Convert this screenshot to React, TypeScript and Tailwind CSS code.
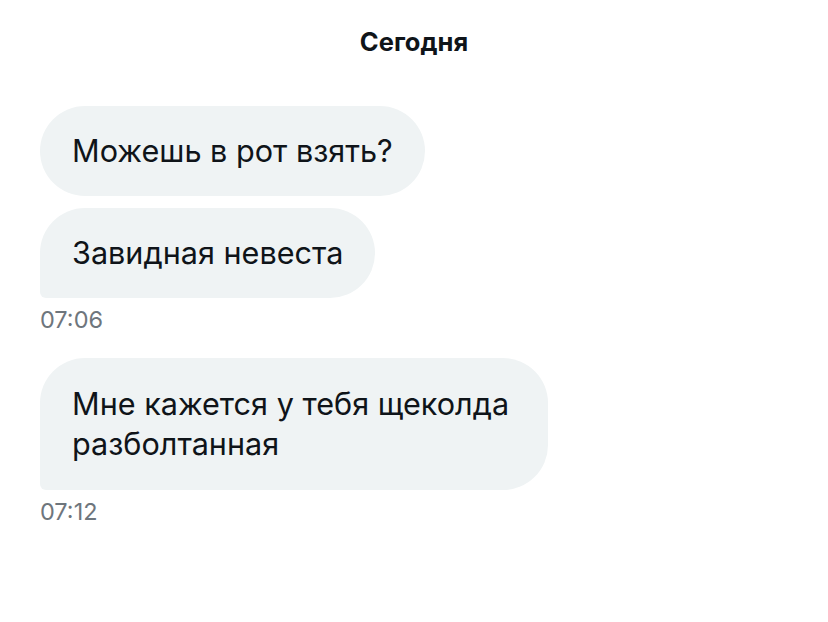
export default function App() {
  return (
    <div
      className="min-h-[622px] w-[828px] bg-white px-10 pt-[28px]"
      style={{ fontFamily: 'Inter, "Liberation Sans", Arial, sans-serif' }}
    >
      <h1 className="text-center text-[25.5px] leading-[28px] font-bold text-[#0f1419]">Сегодня</h1>

      <div className="mt-[50px] flex flex-col items-start">
        <div className="rounded-[45px] bg-[#eff3f4] px-8 py-[25px] text-[30.6px] leading-[40px] text-[#0f1419]">
          Можешь в рот взять?
        </div>
        <div className="mt-3 rounded-[45px] rounded-bl-[6px] bg-[#eff3f4] px-8 py-[25px] text-[30.6px] leading-[40px] text-[#0f1419]">
          Завидная невеста
        </div>
        <span className="mt-[10px] text-[23.5px] leading-[24px] text-[#6e767d]">07:06</span>

        <div className="mt-[26px] max-w-[508px] rounded-[45px] rounded-bl-[6px] bg-[#eff3f4] px-8 py-[26px] text-[30.6px] leading-[40px] text-[#0f1419]">
          Мне кажется у тебя щеколда разболтанная
        </div>
        <span className="mt-[10px] text-[23.5px] leading-[24px] text-[#6e767d]">07:12</span>
      </div>
    </div>
  )
}
